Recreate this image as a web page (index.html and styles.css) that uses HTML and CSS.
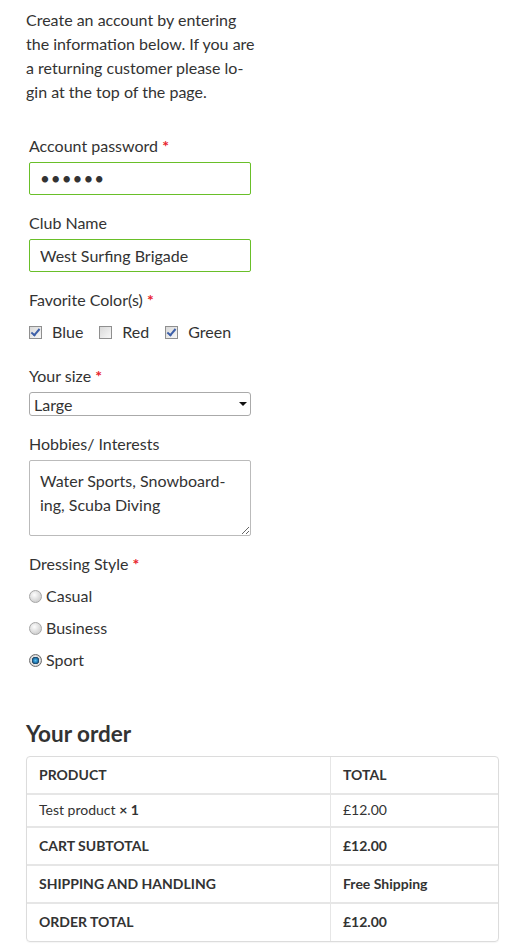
FILE: index.html
```html
<!DOCTYPE html>
<html lang="en">
<head>
    <meta charset="UTF-8">
    <meta name="viewport" content="width=device-width, initial-scale=1.0">
    <title>Checkout</title>
    <link rel="stylesheet" href="styles.css">
</head>
<body>
    <div class="checkout">
        <p class="intro">Create an account by entering the information below. If you are a returning customer please lo&shy;gin at the top of the page.</p>

        <div class="fields">
            <div class="field">
                <label for="password">Account password <span class="required">*</span></label>
                <input type="password" id="password" class="valid" value="secret">
            </div>

            <div class="field">
                <label for="club">Club Name</label>
                <input type="text" id="club" class="valid" value="West Surfing Brigade">
            </div>

            <div class="field field-checks">
                <label>Favorite Color(s) <span class="required">*</span></label>
                <div class="checks">
                    <label class="check"><input type="checkbox" checked>Blue</label>
                    <label class="check"><input type="checkbox">Red</label>
                    <label class="check"><input type="checkbox" checked>Green</label>
                </div>
            </div>

            <div class="field">
                <label for="size">Your size <span class="required">*</span></label>
                <div class="select-wrap">
                    <select id="size">
                        <option>Small</option>
                        <option>Medium</option>
                        <option selected>Large</option>
                    </select>
                </div>
            </div>

            <div class="field">
                <label for="hobbies">Hobbies/ Interests</label>
                <textarea id="hobbies" rows="2">Water Sports, Snowboard&shy;ing, Scuba Diving</textarea>
            </div>

            <div class="field">
                <label>Dressing Style <span class="required">*</span></label>
                <div class="radios">
                    <label class="radio"><input type="radio" name="style">Casual</label>
                    <label class="radio"><input type="radio" name="style">Business</label>
                    <label class="radio"><input type="radio" name="style" checked>Sport</label>
                </div>
            </div>
        </div>

        <h3 class="order-title">Your order</h3>
        <table class="order-table">
            <thead>
                <tr>
                    <th>Product</th>
                    <th class="col-total">Total</th>
                </tr>
            </thead>
            <tbody>
                <tr>
                    <td>Test product <strong>&times; 1</strong></td>
                    <td>&pound;12.00</td>
                </tr>
            </tbody>
            <tfoot>
                <tr>
                    <th>Cart Subtotal</th>
                    <td><strong>&pound;12.00</strong></td>
                </tr>
                <tr>
                    <th>Shipping and Handling</th>
                    <td><strong>Free Shipping</strong></td>
                </tr>
                <tr class="last">
                    <th>Order Total</th>
                    <td><strong>&pound;12.00</strong></td>
                </tr>
            </tfoot>
        </table>
    </div>
</body>
</html>
```

FILE: styles.css
```css
* {
    box-sizing: border-box;
    margin: 0;
    padding: 0;
}

body {
    background: white;
    color: #333;
    font-family: Lato, 'Open Sans', sans-serif;
    font-size: 16px;
    line-height: 24px;
    padding: 8px 22px 8px 26px;
}

.checkout {
    width: 473px;
}

.intro {
    width: 231px;
    margin-bottom: 32px;
    hyphens: manual;
}

.fields {
    width: 222px;
    margin-left: 3px;
}

.field {
    margin-bottom: 18px;
}

.field > label {
    display: block;
    line-height: 20px;
    margin-bottom: 6px;
}

.required {
    color: #e8232c;
    font-weight: bold;
}

input[type="text"],
input[type="password"] {
    display: block;
    width: 222px;
    height: 33px;
    padding: 0 10px;
    border: 1px solid #bbb;
    border-radius: 2px;
    font-family: Lato, sans-serif;
    font-size: 16px;
    color: #333;
    outline: none;
}

input.valid {
    border-color: #69bf29;
}

input[type="password"] {
    font-size: 17px;
    letter-spacing: 1px;
}

/* checkboxes */
.field-checks {
    margin-bottom: 23px;
}

.checks {
    display: flex;
    gap: 16px;
    height: 27px;
    padding-top: 5px;
}

.check {
    display: flex;
    align-items: center;
    gap: 10px;
}

.check input {
    appearance: none;
    position: relative;
    width: 13px;
    height: 13px;
    border: 1px solid #8f8f8f;
    background: linear-gradient(135deg, #d9d9d9, #f7f7f7);
}

.check input:checked::after {
    content: '';
    position: absolute;
    left: 3px;
    top: 0px;
    width: 3px;
    height: 7px;
    border-right: 2px solid #3d5fa8;
    border-bottom: 2px solid #3d5fa8;
    transform: rotate(40deg);
}

/* select */
.select-wrap {
    position: relative;
}

.select-wrap::after {
    content: '';
    position: absolute;
    right: 4px;
    top: 10px;
    border-left: 4px solid transparent;
    border-right: 4px solid transparent;
    border-top: 4px solid #111;
    pointer-events: none;
}

select {
    appearance: none;
    display: block;
    width: 222px;
    height: 24px;
    padding: 0 4px;
    border: 1px solid #aaa;
    border-radius: 3px;
    background: white;
    font-family: Lato, sans-serif;
    font-size: 16px;
    color: #333;
}

textarea {
    display: block;
    width: 222px;
    height: 76px;
    padding: 8px 10px;
    border: 1px solid #bbb;
    border-radius: 2px;
    font-family: Lato, sans-serif;
    font-size: 16px;
    line-height: 24px;
    color: #333;
    hyphens: manual;
    outline: none;
}

/* radios */
.radio {
    display: flex;
    align-items: center;
    gap: 4px;
    height: 32px;
}

.radio input {
    appearance: none;
    width: 13px;
    height: 13px;
    border: 1px solid #a5a5a5;
    border-radius: 50%;
    background: radial-gradient(circle at 40% 35%, #fdfdfd, #d2d2d2 70%);
}

.radio input:checked {
    border-color: #6d6d6d;
    background: radial-gradient(circle, #59c3f2 0, #1c6fa8 2.5px, #1d3c56 3.5px, #e6e6e6 4px, #c9c9c9 6px);
}

/* order */
.order-title {
    margin-top: 42px;
    font-size: 22.5px;
    line-height: 32px;
    font-weight: bold;
    margin-bottom: 6px;
}

.order-table {
    width: 473px;
    border-collapse: separate;
    border-spacing: 0;
    border: 1px solid #dcdcdc;
    border-radius: 4px;
    box-shadow: 0 1px 1px rgba(0, 0, 0, 0.04);
    font-size: 14px;
}

.order-table th,
.order-table td {
    text-align: left;
    padding: 9px 12px;
    border-top: 2px solid #e6e6e6;
    border-left: 1px solid #e6e6e6;
    line-height: 18px;
    color: #333;
}

.order-table th:first-child,
.order-table td:first-child {
    border-left: 0;
}

.order-table thead th {
    border-top: 0;
}

.order-table tbody td {
    padding: 6px 12px 7px;
}

.order-table th {
    text-transform: uppercase;
    font-weight: bold;
}

.order-table .col-total {
    width: 168px;
}

.order-table tr.last th,
.order-table tr.last td {
    padding-bottom: 10px;
}
```
